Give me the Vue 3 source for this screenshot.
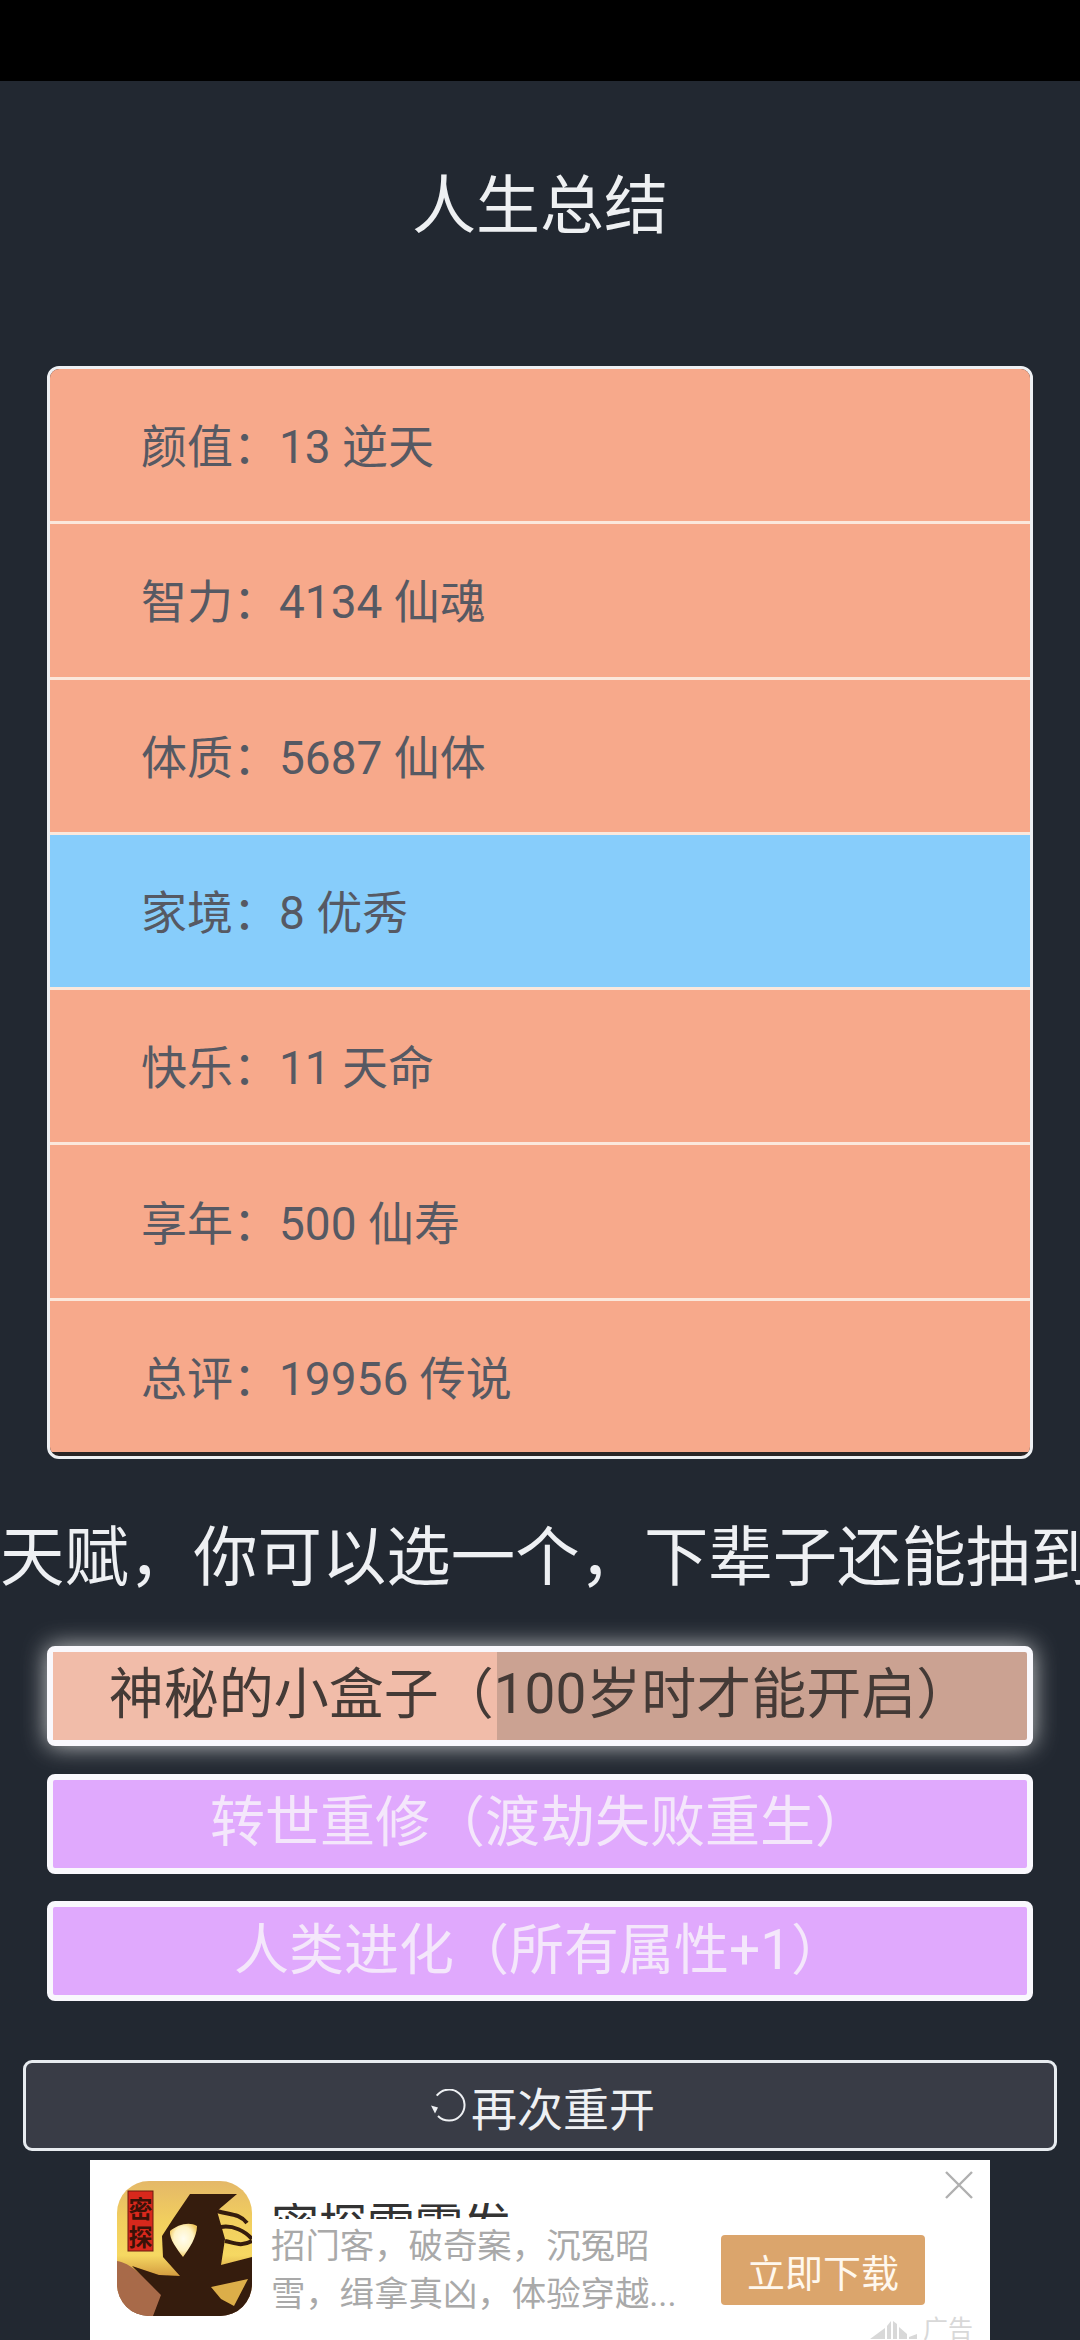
<script setup>
const stats = [
  { label: "颜值", value: "13 逆天" },
  { label: "智力", value: "4134 仙魂" },
  { label: "体质", value: "5687 仙体" },
  { label: "家境", value: "8 优秀", blue: true },
  { label: "快乐", value: "11 天命" },
  { label: "享年", value: "500 仙寿" },
  { label: "总评", value: "19956 传说" },
];
</script>

<template>
  <div class="page">
    <div class="status-bar"></div>
    <h1 class="title">人生总结</h1>

    <ul class="stats">
      <li v-for="s in stats" :key="s.label" class="stat" :class="{ blue: s.blue }">
        {{ s.label }}：{{ s.value }}
      </li>
    </ul>

    <div class="hint">天赋，你可以选一个，下辈子还能抽到</div>

    <div class="talents">
      <div class="talent selected">
        <span class="talent-fill"></span>
        <span class="talent-text">神秘的小盒子（100岁时才能开启）</span>
      </div>
      <div class="talent purple">转世重修（渡劫失败重生）</div>
      <div class="talent purple">人类进化（所有属性+1）</div>
    </div>

    <button class="restart">
      <svg class="restart-icon" viewBox="0 0 46 34" width="46" height="34">
        <path d="M11.7 6.7A15.5 15.5 0 1 1 13 27" fill="none" stroke="#eef0f3" stroke-width="2" />
        <path d="M6 16.5l7 2-3 6z" fill="#eef0f3" />
      </svg>
      <span>再次重开</span>
    </button>

    <div class="ad">
      <svg class="ad-icon" viewBox="0 0 135 135" width="135" height="135">
        <defs>
          <linearGradient id="sky" x1="0" y1="0" x2="0" y2="1">
            <stop offset="0" stop-color="#e4b868" />
            <stop offset="0.3" stop-color="#f2cf5e" />
            <stop offset="0.55" stop-color="#f6d862" />
            <stop offset="0.75" stop-color="#c98a35" />
            <stop offset="1" stop-color="#6e3a1e" />
          </linearGradient>
          <radialGradient id="glow" cx="0.5" cy="0.45" r="0.55">
            <stop offset="0" stop-color="#fffdf0" />
            <stop offset="0.65" stop-color="#fff3c4" />
            <stop offset="1" stop-color="#f0c860" />
          </radialGradient>
          <clipPath id="round"><rect width="135" height="135" rx="32" /></clipPath>
          <filter id="soft"><feGaussianBlur stdDeviation="0.7" /></filter>
        </defs>
        <g clip-path="url(#round)">
          <rect width="135" height="135" fill="url(#sky)" />
          <g filter="url(#soft)">
            <path d="M0 80C14 82 26 96 44 112L60 135H0z" fill="#a86a48" />
            <path d="M73 13L120 13 100 30 108 58 104 84 135 76V135H36L44 114 15 85 42 94 63 95 46 76 45 55 56 38z" fill="#341a0b" />
            <path d="M100 30C112 34 122 32 130 42M104 46C116 44 128 50 135 58M108 60C118 62 124 66 135 60" fill="none" stroke="#341a0b" stroke-width="4" />
            <path d="M94 106L131 98 117 125 104 118z" fill="#dcae48" />
            <path d="M53 50C60 44 72 40 80 45 80 56 72 68 66 76 60 68 52 58 53 50z" fill="url(#glow)" />
          </g>
          <rect x="11" y="10" width="25" height="60" fill="#d8281c" stroke="#6a1a10" stroke-width="1" />
          <text x="23.5" y="37" class="ad-icon-text">密</text>
          <text x="23.5" y="65" class="ad-icon-text">探</text>
        </g>
      </svg>

      <div class="ad-copy">
        <div class="ad-name"><span>密探雷霆发</span></div>
        <p class="ad-desc">招门客，破奇案，沉冤昭<br />雪，缉拿真凶，体验穿越...</p>
      </div>

      <div class="ad-cta">立即下载</div>

      <svg class="ad-close" viewBox="0 0 28 28" width="28" height="28">
        <path d="M1 1L27 27M27 1L1 27" stroke="#b0b0b0" stroke-width="2.4" fill="none" />
      </svg>

      <div class="ad-mark">
        <svg viewBox="0 0 48 20" width="48" height="20">
          <path d="M0 20L15 9V20zM17 7L21 2V20H17zM23 2L27 5V20H23zM29 8L37 15V20H29zM39 18L47 15V20H39z" fill="#d8d8d8" />
        </svg>
        <span>广告</span>
      </div>
    </div>
  </div>
</template>

<style scoped>
.page {
  position: relative;
  width: 1080px;
  height: 2340px;
  overflow: hidden;
  background: #222831;
  color: #eeeeee;
  font-family: Roboto, "Noto Sans CJK SC", sans-serif;
}

.status-bar {
  height: 81px;
  background: #000;
}

.title {
  margin: 0;
  padding-top: 88px;
  height: 200px;
  box-sizing: border-box;
  font-size: 64px;
  line-height: 76px;
  font-weight: 400;
  text-align: center;
  color: #eef0f2;
}

.stats {
  list-style: none;
  margin: 85px 47px 0;
  padding: 0;
  border: 3px solid #eef0f3;
  border-radius: 12px;
  overflow: hidden;
  height: 1093px;
  box-sizing: border-box;
  background: #2b2626;
}

.stat {
  display: flex;
  align-items: center;
  height: 155.3px;
  box-sizing: border-box;
  padding: 0 0 4px 91px;
  background: #f7a98b;
  border-bottom: 3px solid #fbe8dc;
  font-size: 46px;
  color: #565963;
  white-space: pre;
}

.stat:last-child {
  border-bottom: none;
  height: 151.7px;
}

.stat.blue {
  background: #87cdfb;
}

.hint {
  margin-top: 59px;
  height: 80px;
  font-size: 64.4px;
  line-height: 80px;
  white-space: nowrap;
  color: #eef0f3;
}

.talents {
  display: flex;
  flex-direction: column;
  gap: 27.5px;
  margin: 48px 47px 0;
}

.talent {
  position: relative;
  height: 100px;
  box-sizing: border-box;
  border: 6px solid #f9f8fd;
  border-radius: 8px;
  display: flex;
  align-items: center;
  justify-content: center;
  font-size: 55px;
  overflow: hidden;
  padding-bottom: 13px;
}

.talent.purple {
  background: #e0a9fd;
  color: #f4e7fb;
}

.talent.selected {
  overflow: visible;
  padding-bottom: 14px;
  background: #cba292;
  color: #443a36;
  box-shadow: 0 0 24px rgba(238, 238, 238, 0.8);
}

.talent-fill {
  position: absolute;
  left: 0;
  top: 0;
  bottom: 0;
  width: 45.6%;
  background: #f1bca9;
}

.talent-text {
  position: relative;
}

.restart {
  display: flex;
  align-items: center;
  justify-content: center;
  width: 1034px;
  height: 91px;
  margin: 59px 23px 0;
  padding: 0;
  box-sizing: border-box;
  border: 3.5px solid #e8ecf0;
  border-radius: 9px;
  background: #393c46;
  color: #eef0f3;
  font-family: inherit;
  font-size: 46px;
}

.ad {
  position: relative;
  display: flex;
  align-items: flex-start;
  width: 900px;
  height: 180px;
  margin: 9px 90px 0;
  background: #fff;
  overflow: hidden;
}

.ad-icon {
  flex: none;
  margin: 21px 0 0 27px;
}

.ad-icon-text {
  font-size: 24px;
  font-weight: 700;
  text-anchor: middle;
  fill: #3a1208;
}

.ad-copy {
  flex: none;
  width: 440px;
  margin: 43px 0 0 19px;
}

.ad-name {
  height: 16px;
  overflow: hidden;
  font-size: 48px;
  line-height: 48px;
  color: #333;
  white-space: nowrap;
}

.ad-desc {
  margin: 3px 0 0;
  font-size: 34.4px;
  line-height: 48px;
  color: #a9a9a9;
  white-space: nowrap;
}

.ad-cta {
  flex: none;
  display: flex;
  align-items: center;
  justify-content: center;
  width: 204px;
  height: 70px;
  margin: 75px 0 0 10px;
  border-radius: 4px;
  background: #dba56c;
  color: #fff8ee;
  font-size: 38px;
}

.ad-close {
  position: absolute;
  top: 11px;
  right: 17px;
}

.ad-mark {
  position: absolute;
  right: 17px;
  top: 155px;
  display: flex;
  align-items: flex-start;
  gap: 5px;
  font-size: 25px;
  line-height: 30px;
  color: #d8d8d8;
}

.ad-mark svg {
  margin-top: 4px;
}
</style>

<style>
html,
body {
  margin: 0;
  background: #222831;
}
</style>
